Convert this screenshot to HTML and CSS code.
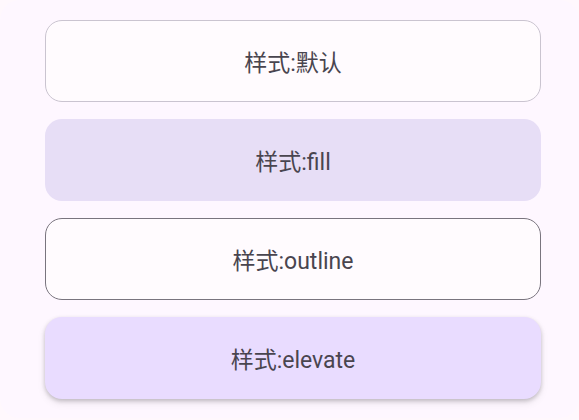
FILE: index.html
```html
<!DOCTYPE html>
<html lang="zh">
<head>
  <meta charset="UTF-8" />
  <meta name="viewport" content="width=device-width, initial-scale=1.0"/>
  <title>Card styles</title>
  <link rel="stylesheet" href="styles.css">
</head>
<body>

  <div class="panel">
    <div class="card card-default">样式:默认</div>
    <div class="card card-fill">样式:fill</div>
    <div class="card card-outline">样式:outline</div>
    <div class="card card-elevate">样式:elevate</div>
  </div>

</body>
</html>
```

FILE: styles.css
```css
body {
  margin: 0;
  background-color: #fff8fd;
  font-family: Roboto, "Noto Sans CJK SC", sans-serif;
}

.panel {
  width: 579px;
  height: 418px;
  box-sizing: border-box;
  background: #fef7ff;
  border-radius: 20px;
  padding: 20px 38px 0 45px;
  display: flex;
  flex-direction: column;
  gap: 17px;
}

.card {
  height: 82px;
  box-sizing: border-box;
  border-radius: 17px;
  display: flex;
  align-items: center;
  justify-content: center;
  padding-bottom: 1px;
  font-size: 23px;
  color: #49454f;
}

.card-default {
  background: #fffbfe;
  border: 1px solid #cac4d0;
}

.card-fill {
  background: #e7def6;
}

.card-outline {
  background: #fffbfe;
  border: 1px solid #79747e;
}

.card-elevate {
  background: #e9dcff;
  box-shadow: 0 2px 4px rgba(0,0,0,0.2), 0 4px 8px rgba(0,0,0,0.08);
}
```
